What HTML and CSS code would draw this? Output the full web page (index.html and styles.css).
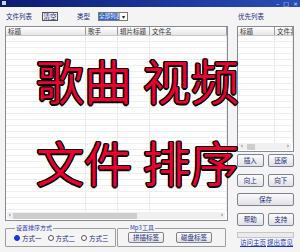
FILE: index.html
```html
<!DOCTYPE html>
<html lang="zh">
<head>
    <meta charset="UTF-8">
    <meta name="viewport" content="width=device-width, initial-scale=1.0">
    <title>文件列表</title>
    <link rel="stylesheet" href="styles.css">
</head>
<body>
<div class="window">
    <div class="titlebar">
        <span class="app-icon"></span>
        <div class="caption-btns"><span>&#8211;</span><span>&#9633;</span><span>&#215;</span></div>
    </div>

    <div class="content">
        <div class="left">
            <div class="toolbar">
                <span class="label">文件列表</span>
                <button class="btn clear-btn">清空</button>
                <span class="label type-label">类型</span>
                <div class="combo">
                    <span class="combo-text">全部列表</span>
                    <span class="combo-arrow">&#9662;</span>
                </div>
            </div>

            <div class="list main-list">
                <div class="list-head">
                    <span class="col c1">标题</span>
                    <span class="col c2">歌手</span>
                    <span class="col c3">辑片标题</span>
                    <span class="col c4">文件名</span>
                </div>
                <div class="list-body">
                    <span class="col c1"></span>
                    <span class="col c2"></span>
                    <span class="col c3"></span>
                    <span class="col c4"></span>
                </div>
                <div class="hscroll">
                    <span class="arr">&#8249;</span>
                    <span class="track"><span class="thumb main-thumb"></span></span>
                    <span class="arr">&#8250;</span>
                </div>
            </div>

            <div class="groups">
                <fieldset class="group sort-group">
                    <legend>设置排序方式</legend>
                    <label class="radio"><span class="dot checked"></span>方式一</label>
                    <label class="radio"><span class="dot"></span>方式二</label>
                    <label class="radio"><span class="dot"></span>方式三</label>
                </fieldset>
                <fieldset class="group mp3-group">
                    <legend>Mp3工具</legend>
                    <button class="btn tool-btn">拼插标签</button>
                    <button class="btn tool-btn">磁盘标签</button>
                </fieldset>
            </div>
        </div>

        <div class="right">
            <div class="toolbar">
                <span class="label">优先列表</span>
            </div>

            <div class="list side-list">
                <div class="list-head">
                    <span class="col s1">标题</span>
                    <span class="col s2">文件名</span>
                </div>
                <div class="list-body">
                    <span class="col s1"></span>
                    <span class="col s2"></span>
                </div>
                <div class="hscroll">
                    <span class="arr">&#8249;</span>
                    <span class="track"><span class="thumb side-thumb"></span></span>
                    <span class="arr">&#8250;</span>
                </div>
            </div>

            <div class="btn-grid first-row">
                <button class="btn">插入</button>
                <button class="btn">还原</button>
            </div>
            <div class="btn-grid">
                <button class="btn">向上</button>
                <button class="btn">向下</button>
            </div>
            <button class="btn wide">保存</button>
            <div class="btn-grid">
                <button class="btn">帮助</button>
                <button class="btn">支持</button>
            </div>
            <div class="progress"></div>
            <div class="links">
                <a href="#">访问主页</a>
                <a href="#">提出意见</a>
            </div>
        </div>
    </div>

    <!-- big caption laid over the window -->
    <div class="caption line1"><span>歌曲</span> <span>视频</span></div>
    <div class="caption line2"><span>文件</span> <span>排序</span></div>
</div>
</body>
</html>
```

FILE: styles.css
```css
body {
    margin: 0;
    font-family: "Noto Sans CJK SC", "Noto Sans", sans-serif;
    background: #f3f3f3;
}
.window {
    position: relative;
    width: 300px;
    height: 252px;
    background: #f4f4f4;
    overflow: hidden;
    font-size: 6.5px;
    color: #1c2a7a;
}
.titlebar {
    height: 7px;
    background: linear-gradient(to right, #0a1a70, #1d3a9e 60%, #2a4db4);
    display: flex;
    align-items: center;
    justify-content: space-between;
    padding: 0 2px;
}
.app-icon {
    width: 4px;
    height: 4px;
    background: #c9d4ee;
    margin-top: -2px;
}
.caption-btns {
    display: flex;
    gap: 4px;
    color: #dfe6f7;
    font-family: "DejaVu Sans", sans-serif;
    font-size: 6px;
    line-height: 6px;
}
.content {
    display: flex;
    gap: 9px;
    padding: 4px 6px 0 5px;
}
.left {
    width: 223px;
}
.right {
    width: 57px;
}
.toolbar {
    height: 10px;
    margin-bottom: 5px;
    display: flex;
    align-items: center;
}
.label {
    padding-left: 1px;
    line-height: 10px;
}
.btn {
    font-family: inherit;
    font-size: 6.5px;
    color: #1c2a7a;
    background: linear-gradient(#fbfbfb, #e2e2e6);
    border: 1px solid #7d8190;
    border-radius: 2px;
    padding: 0;
    line-height: 1;
    cursor: pointer;
    white-space: nowrap;
}
.clear-btn {
    width: 16px;
    height: 9px;
    margin-left: 10px;
    background: #f0f0f0;
    border-color: #555;
    border-radius: 0;
}
.type-label {
    margin-left: 18px;
}
.combo {
    margin-left: 8px;
    width: 30px;
    height: 9px;
    display: flex;
    background: #fff;
    border: 1px solid #7a7a7a;
    box-sizing: border-box;
}
.combo-text {
    flex: 1;
    background: #3564c8;
    color: #fff;
    font-size: 5.5px;
    line-height: 7px;
    overflow: hidden;
    white-space: nowrap;
}
.combo-arrow {
    width: 7px;
    font-family: "DejaVu Sans", sans-serif;
    font-size: 6px;
    line-height: 7px;
    text-align: center;
    color: #222;
    border-left: 1px solid #aaa;
}

/* list views */
.list {
    border: 1px solid #868a94;
    background: #fff;
    display: flex;
    flex-direction: column;
    box-sizing: border-box;
}
.main-list {
    height: 195px;
}
.side-list {
    height: 126px;
}
.list-head {
    display: flex;
    height: 8px;
    background: linear-gradient(#ffffff, #e6e6e6);
    border-bottom: 1px solid #c8c8c8;
    color: #333;
}
.list-head .col {
    border-right: 1px solid #9a9a9a;
    line-height: 8px;
    padding-left: 2px;
    box-sizing: border-box;
    white-space: nowrap;
    overflow: hidden;
}
.list-body {
    flex: 1;
    display: flex;
    background: repeating-linear-gradient(#fff 0, #fff 5px, #efefef 5px, #efefef 6px);
}
.list-body .col {
    border-right: 1px solid #ececec;
    box-sizing: border-box;
}
.c1 { width: 80px; }
.c2 { width: 32px; }
.c3 { width: 32px; }
.c4 { flex: 1; }
.s1 { width: 37px; }
.s2 { flex: 1; }

.hscroll {
    height: 7px;
    margin: 0 2px 1px 1px;
    display: flex;
    align-items: center;
    background: #f0f0f0;
    color: #555;
}
.arr {
    width: 6px;
    font-family: "DejaVu Sans", sans-serif;
    font-size: 7px;
    line-height: 7px;
    text-align: center;
}
.track {
    flex: 1;
    height: 6px;
}
.thumb {
    display: block;
    height: 6px;
    background: #cdcdcd;
}
.main-thumb {
    width: 124px;
}
.side-thumb {
    width: 8px;
    margin-left: 2px;
}

/* option groups */
.groups {
    display: flex;
    gap: 1px;
    margin-top: 4px;
}
.group {
    margin: 0;
    height: 22px;
    box-sizing: border-box;
    border: 1px solid #9d9d9d;
    border-radius: 1px;
    padding: 0 0 2px;
    display: flex;
    align-items: center;
    min-width: 0;
}
.group legend {
    padding: 0 1px;
    margin-left: 1px;
    color: #2436b0;
    font-size: 6px;
    line-height: 6px;
    white-space: nowrap;
}
.sort-group {
    width: 111px;
    gap: 6px;
    padding-left: 8px;
}
.mp3-group {
    width: 109px;
    gap: 12px;
    padding-left: 10px;
}
.radio {
    display: flex;
    align-items: center;
    gap: 2px;
    color: #1c2a7a;
    white-space: nowrap;
}
.dot {
    width: 4px;
    height: 4px;
    border: 1px solid #555;
    border-radius: 50%;
    background: #fff;
}
.dot.checked {
    background: #1436e0;
    border-color: #1436e0;
}
.tool-btn {
    width: 36px;
    height: 11px;
}

/* right column buttons */
.btn-grid {
    display: grid;
    grid-template-columns: 1fr 1fr;
    gap: 4px;
    margin-top: 7px;
}
.btn-grid .btn {
    height: 13px;
}
.first-row {
    margin-top: 2px;
}
.wide {
    display: block;
    width: 100%;
    height: 13px;
    margin-top: 6px;
}
.progress {
    height: 4px;
    margin-top: 6px;
    border: 1px solid #c6c6c6;
    background: #ebebeb;
}
.links {
    display: flex;
    justify-content: space-between;
    padding: 0 1px 0 3px;
    line-height: 9px;
}
.links a {
    color: #1d34c0;
    font-size: 6.5px;
}

/* big outlined caption */
.caption {
    position: absolute;
    left: 36px;
    font-size: 48px;
    font-weight: 350;
    line-height: 48px;
    white-space: pre;
    color: #ee0030;
    text-shadow:
        -1.5px 0 #000, 1.5px 0 #000, 0 -1.5px #000, 0 1.5px #000,
        -1px -1px #000, 1px -1px #000, -1px 1px #000, 1px 1px #000;
}
.line1 {
    top: 55px;
}
.line2 {
    top: 137px;
}
```
